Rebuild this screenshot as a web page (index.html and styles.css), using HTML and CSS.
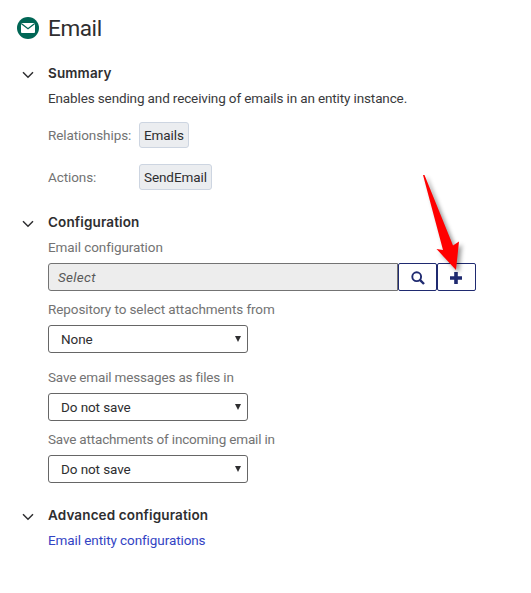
FILE: index.html
```html
<!DOCTYPE html>
<html lang="en">
<head>
<meta charset="utf-8">
<title>Email</title>
<link rel="stylesheet" href="styles.css">
</head>
<body>
<main class="panel">
  <header class="header">
    <svg class="logo" viewBox="0 0 22 22"><circle cx="11" cy="11" r="11" fill="#006655"/><rect x="4" y="6" width="14" height="10" rx="1" fill="#fff"/><path d="M4.200 6.500 11 11.800l6.800-5.300" fill="none" stroke="#006655" stroke-width="1.300"/></svg>
    <h1 class="title">Email</h1>
  </header>

  <section class="section">
    <svg class="chevron" viewBox="0 0 12 8"><path d="M1 1.300 6 6.300l5-5"/></svg>
    <div class="body">
      <h2 class="heading">Summary</h2>
      <p class="line dark">Enables sending and receiving of emails in an entity instance.</p>
      <div class="row first"><span class="key">Relationships:</span><span class="chip">Emails</span></div>
      <div class="row"><span class="key">Actions:</span><span class="chip">SendEmail</span></div>
    </div>
  </section>

  <section class="section">
    <svg class="chevron" viewBox="0 0 12 8"><path d="M1 1.300 6 6.300l5-5"/></svg>
    <div class="body">
      <h2 class="heading">Configuration</h2>
      <p class="line">Email configuration</p>
      <div class="picker">
        <div class="input">Select</div>
        <button class="btn" aria-label="Search"><svg width="14" height="14" viewBox="0 0 14 14"><circle cx="5.700" cy="5.700" r="4.400" fill="none" stroke="#1f2a70" stroke-width="1.900"/><path d="M8.900 8.900 13 13" stroke="#1f2a70" stroke-width="2.400"/></svg></button>
        <button class="btn add" aria-label="Add"><svg width="12" height="12" viewBox="0 0 12 12"><path d="M6 0v12M0 6h12" stroke="#1f2a70" stroke-width="3.600"/></svg>
          <svg class="pointer" width="60" height="120" viewBox="0 0 60 120"><path d="M11 15 12.500 15 41 85.500 47 81.500 44 110 24.500 89 31 90Z" fill="#f00"/></svg>
        </button>
      </div>
      <p class="line next">Repository to select attachments from</p>
      <div class="select">None<svg class="caret" viewBox="0 0 6 6"><path d="M0 0h6L3 6z"/></svg></div>
      <p class="line next apart tight">Save email messages as files in</p>
      <div class="select">Do not save<svg class="caret" viewBox="0 0 6 6"><path d="M0 0h6L3 6z"/></svg></div>
      <p class="line next tight">Save attachments of incoming email in</p>
      <div class="select">Do not save<svg class="caret" viewBox="0 0 6 6"><path d="M0 0h6L3 6z"/></svg></div>
    </div>
  </section>

  <section class="section">
    <svg class="chevron" viewBox="0 0 12 8"><path d="M1 1.300 6 6.300l5-5"/></svg>
    <div class="body">
      <h2 class="heading">Advanced configuration</h2>
      <p class="line"><a class="link">Email entity configurations</a></p>
    </div>
  </section>
</main>
</body>
</html>
```
FILE: styles.css
```css
* { box-sizing: border-box; }
body {
  margin: 0;
  background: #fff;
  color: #2e2e30;
  font-family: Roboto, "Liberation Sans", sans-serif;
  font-size: 13.5px;
  letter-spacing: -0.09px;
}
h1, h2, p { margin: 0; }
.panel { padding: 12px 0 0 17px; }
.header { display: flex; align-items: center; height: 32px; gap: 9px; }
.logo { width: 22px; height: 22px; }
.title {
  font-size: 22.5px;
  font-weight: 400;
  line-height: 32px;
  letter-spacing: -0.4px;
}
.section { display: flex; margin-top: 20px; }
.header + .section { margin-top: 17px; }
.chevron { width: 12px; height: 8px; margin: 10px 14px 0 5px; flex: none; }
.chevron path { fill: none; stroke: #2e2e30; stroke-width: 1.5; }
.heading {
  height: 24px;
  font-family: Inter, Roboto, sans-serif;
  font-size: 13.5px;
  font-weight: 600;
  line-height: 24px;
  letter-spacing: 0.13px;
}
.line { height: 20px; line-height: 20px; margin-top: 3px; color: #737373; white-space: nowrap; }
.dark { color: #3a3a3c; letter-spacing: -0.13px; }
.tight { letter-spacing: -0.17px; }
.next { margin-top: 8px; }
.apart { margin-top: 14px; }
.row { display: flex; align-items: center; height: 26px; margin-top: 16px; }
.first { margin-top: 14px; }
.key { width: 91px; color: #737373; }
.chip {
  height: 26px;
  line-height: 25px;
  padding: 0 4px;
  border: 1px solid #cdd5e1;
  border-radius: 3px;
  background: #ebedf0;
  white-space: nowrap;
}
.picker { display: flex; margin-top: 6px; }
.input {
  width: 350px;
  height: 28px;
  padding-left: 9px;
  border: 1px solid #737373;
  border-radius: 3px 0 0 3px;
  background: #ededed;
  color: #595959;
  font-size: 13.5px;
  font-style: italic;
  letter-spacing: 0.3px;
  line-height: 27px;
}
.btn {
  position: relative;
  display: flex;
  align-items: center;
  justify-content: center;
  width: 39px;
  height: 28px;
  padding: 1px 0 0;
  border: 1px solid #1f2a70;
  border-radius: 2px;
  background: #fff;
}
.add { padding-right: 1px; }
.pointer {
  position: absolute;
  left: -26px;
  top: -104px;
  filter: drop-shadow(3px 3px 2px rgba(0, 0, 0, 0.4));
}
.select {
  display: flex;
  align-items: center;
  justify-content: space-between;
  width: 200px;
  height: 28px;
  margin-top: 6px;
  padding: 0 6px 0 12px;
  border: 1px solid #666;
  border-radius: 3px;
}
.caret { width: 6px; height: 6px; fill: #2e2e30; }
.link { color: #3344c4; }
```
